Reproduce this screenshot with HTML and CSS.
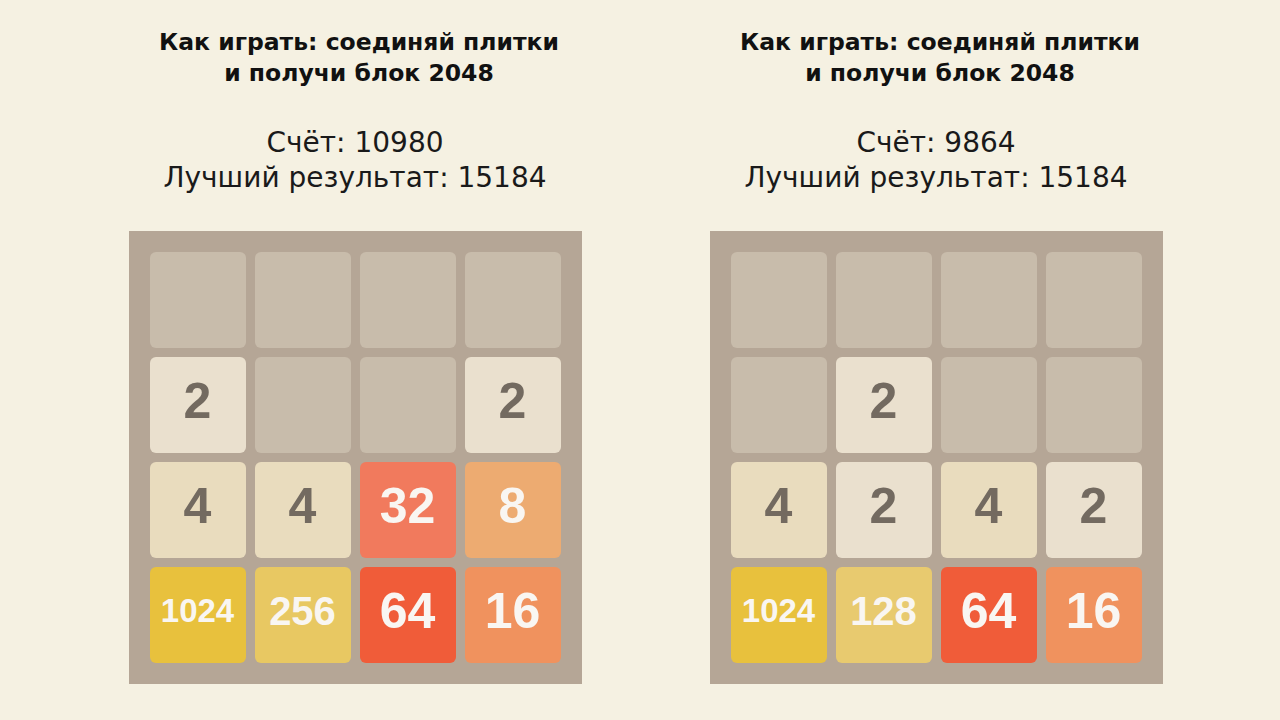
FILE: index.html
```html
<!DOCTYPE html>
<html lang="ru">
<head>
  <meta charset="UTF-8" />
  <meta name="viewport" content="width=device-width, initial-scale=1.0" />
  <title>2048</title>
  <link rel="stylesheet" href="styles.css">
</head>
<body>

  <main class="games">

    <!-- Left game -->
    <section class="game">
      <h2 class="how-to">Как играть: соединяй плитки<br>и получи блок 2048</h2>
      <div class="scores">
        <div>Счёт: 10980</div>
        <div>Лучший результат: 15184</div>
      </div>
      <div class="board">
        <div class="tile"></div>
        <div class="tile"></div>
        <div class="tile"></div>
        <div class="tile"></div>
        <div class="tile t2">2</div>
        <div class="tile"></div>
        <div class="tile"></div>
        <div class="tile t2">2</div>
        <div class="tile t4">4</div>
        <div class="tile t4">4</div>
        <div class="tile t32">32</div>
        <div class="tile t8">8</div>
        <div class="tile t1024">1024</div>
        <div class="tile t256">256</div>
        <div class="tile t64">64</div>
        <div class="tile t16">16</div>
      </div>
    </section>

    <!-- Right game -->
    <section class="game">
      <h2 class="how-to">Как играть: соединяй плитки<br>и получи блок 2048</h2>
      <div class="scores">
        <div>Счёт: 9864</div>
        <div>Лучший результат: 15184</div>
      </div>
      <div class="board">
        <div class="tile"></div>
        <div class="tile"></div>
        <div class="tile"></div>
        <div class="tile"></div>
        <div class="tile"></div>
        <div class="tile t2">2</div>
        <div class="tile"></div>
        <div class="tile"></div>
        <div class="tile t4">4</div>
        <div class="tile t2">2</div>
        <div class="tile t4">4</div>
        <div class="tile t2">2</div>
        <div class="tile t1024">1024</div>
        <div class="tile t128">128</div>
        <div class="tile t64">64</div>
        <div class="tile t16">16</div>
      </div>
    </section>

  </main>

</body>
</html>
```

FILE: styles.css
```css
body {
  margin: 0;
  background-color: #f5f1e2;
  color: #111;
  font-family: 'Liberation Sans', Arial, sans-serif;
}
.games {
  display: flex;
  justify-content: center;
  padding-left: 11px;
}
.game {
  width: 581px;
  display: flex;
  flex-direction: column;
  align-items: center;
}
/* Title */
.how-to {
  margin: 27px 0 0;
  padding-left: 8px;
  font-family: 'DejaVu Sans', sans-serif;
  font-size: 23.5px;
  line-height: 31px;
  font-weight: bold;
  text-align: center;
}
/* Score lines */
.scores {
  margin-top: 36px;
  font-family: 'DejaVu Sans', sans-serif;
  font-size: 28px;
  line-height: 35px;
  text-align: center;
  color: #1a1a1a;
}
/* Board */
.board {
  margin-top: 36px;
  display: grid;
  grid-template-columns: repeat(4, 96px);
  grid-auto-rows: 96px;
  gap: 9px;
  padding: 21px;
  background-color: #b5a696;
}
.tile {
  border-radius: 6px;
  background-color: #c8bcab;
  display: flex;
  align-items: center;
  justify-content: center;
  padding-bottom: 8px;
  font-family: 'Liberation Sans', Arial, sans-serif;
  font-weight: bold;
  font-size: 50px;
  color: #f9f6f2;
}
.t2 { background-color: #eae0ce; color: #736a60; }
.t4 { background-color: #e9dcbe; color: #736a60; }
.t8 { background-color: #edab71; }
.t16 { background-color: #f0925e; }
.t32 { background-color: #f17a5d; }
.t64 { background-color: #f05c39; }
.t128 { background-color: #e8ca6f; font-size: 40px; }
.t256 { background-color: #e8c862; font-size: 40px; }
.t1024 { background-color: #e8c13d; font-size: 33px; }
```
